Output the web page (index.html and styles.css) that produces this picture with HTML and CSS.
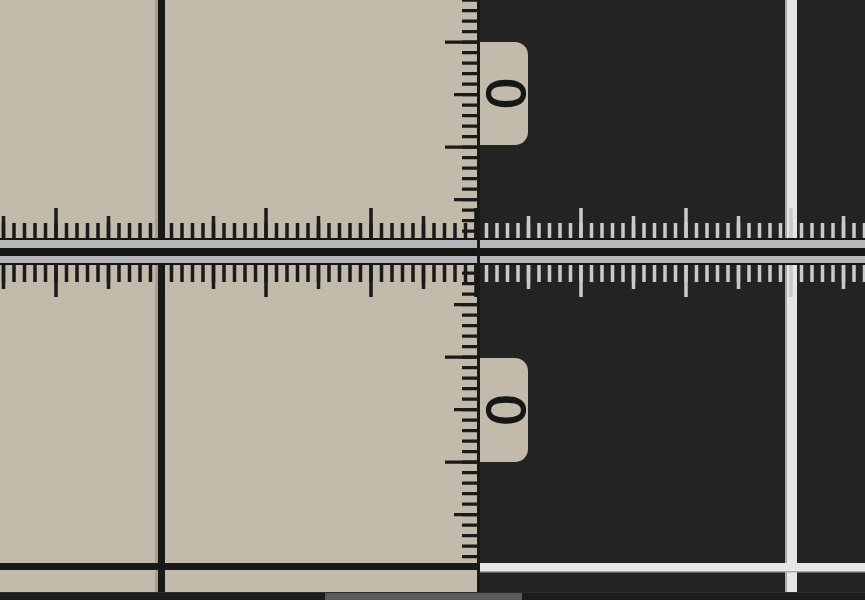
FILE: index.html
```html
<!DOCTYPE html>
<html>
<head>
<meta charset="utf-8">
<link rel="stylesheet" href="styles.css">
</head>
<body>
<div class="app">
  <div class="viewport">
    <div class="pane pane-paper"></div>
    <div class="pane pane-dark"></div>
    <svg class="overlay" width="865" height="592" viewBox="0 0 865 592">
      <!-- guide lines -->
      <rect class="guide-shade" x="155" y="0" width="3" height="592"/>
      <rect class="guide-dark" x="158" y="0" width="7" height="592"/>
      <rect class="guide-light-edge" x="785" y="0" width="2" height="592"/>
      <rect class="guide-light" x="787" y="0" width="10" height="592"/>

      <!-- horizontal ruler ticks, paper side -->
      <g class="ticks-dark">
        <line x1="1.75" x2="478" y1="230.5" y2="230.5" stroke-width="15" stroke-dasharray="3.5 7"/>
        <line x1="1.75" x2="478" y1="227" y2="227" stroke-width="22" stroke-dasharray="3.5 101.5"/>
        <line x1="54.25" x2="478" y1="223" y2="223" stroke-width="30" stroke-dasharray="3.5 101.5"/>
        <line x1="1.75" x2="478" y1="273.5" y2="273.5" stroke-width="17" stroke-dasharray="3.5 7"/>
        <line x1="1.75" x2="478" y1="277" y2="277" stroke-width="24" stroke-dasharray="3.5 101.5"/>
        <line x1="54.25" x2="478" y1="281" y2="281" stroke-width="32" stroke-dasharray="3.5 101.5"/>
      </g>
      <!-- horizontal ruler ticks, dark side -->
      <g class="ticks-light">
        <line x1="484.75" x2="865" y1="230.5" y2="230.5" stroke-width="15" stroke-dasharray="3.5 7"/>
        <line x1="526.75" x2="865" y1="227" y2="227" stroke-width="22" stroke-dasharray="3.5 101.5"/>
        <line x1="579.25" x2="865" y1="223" y2="223" stroke-width="30" stroke-dasharray="3.5 101.5"/>
        <line x1="484.75" x2="865" y1="273.5" y2="273.5" stroke-width="17" stroke-dasharray="3.5 7"/>
        <line x1="526.75" x2="865" y1="277" y2="277" stroke-width="24" stroke-dasharray="3.5 101.5"/>
        <line x1="579.25" x2="865" y1="281" y2="281" stroke-width="32" stroke-dasharray="3.5 101.5"/>
      </g>

      <!-- vertical ruler ticks -->
      <g class="ticks-dark">
        <line x1="469.5" x2="469.5" y1="-1.5" y2="562" stroke-width="15" stroke-dasharray="3.3 7.2"/>
        <line x1="465.5" x2="465.5" y1="93" y2="562" stroke-width="23" stroke-dasharray="3.3 101.7"/>
        <line x1="461" x2="461" y1="40.5" y2="562" stroke-width="32" stroke-dasharray="3.3 101.7"/>
      </g>

      <!-- ruler band -->
      <rect class="band-dark" x="0" y="238" width="865" height="27"/>
      <rect class="band-light" x="0" y="240" width="865" height="8"/>
      <rect class="band-light" x="0" y="256" width="865" height="7"/>

      <!-- edges -->
      <rect class="guide-dark" x="477" y="0" width="3" height="592"/>
      <rect class="guide-dark" x="0" y="563" width="478" height="7"/>
      <rect class="guide-light" x="480" y="563" width="385" height="8"/>
      <rect class="guide-light-edge" x="480" y="571" width="385" height="1.5"/>

      <!-- labels -->
      <path class="tab" d="M480 42 H515 A13 13 0 0 1 528 55 V132 A13 13 0 0 1 515 145 H480 Z"/>
      <text class="tab-label" transform="translate(505 93.5) rotate(90)" text-anchor="middle" dominant-baseline="central">0</text>
      <path class="tab" d="M480 358 H515 A13 13 0 0 1 528 371 V449 A13 13 0 0 1 515 462 H480 Z"/>
      <text class="tab-label" transform="translate(505 410) rotate(90)" text-anchor="middle" dominant-baseline="central">0</text>
    </svg>
  </div>
  <div class="hscroll"><div class="hscroll-thumb"></div></div>
</div>
</body>
</html>
```
FILE: styles.css
```css
html, body {
  margin: 0;
  padding: 0;
  background: #1d1d1d;
}

.app {
  width: 865px;
  height: 600px;
  display: flex;
  flex-direction: column;
  overflow: hidden;
}

.viewport {
  position: relative;
  height: 592px;
  display: flex;
  flex-direction: row;
}

.pane-paper {
  width: 478px;
  background: #c2bbab;
}

.pane-dark {
  flex: 1;
  background: #232323;
}

.overlay {
  position: absolute;
  left: 0;
  top: 0;
}

.guide-dark { fill: #191919; }
.guide-shade { fill: #a6a091; }
.guide-light { fill: #e6e6e6; }
.guide-light-edge { fill: #a8a8a8; }

.ticks-dark line { stroke: #1a1a1a; }
.ticks-light line { stroke: #cacaca; }

.band-dark { fill: #151515; }
.band-light { fill: #b6b5bb; }

.tab { fill: #c2bbab; }

.tab-label {
  font-family: "DejaVu Sans", sans-serif;
  font-size: 52px;
  fill: #161616;
  stroke: #161616;
  stroke-width: 1.2px;
}

.hscroll {
  height: 8px;
  background: #1c1c1c;
  border-top: 1px solid #2c2c2c;
  box-sizing: border-box;
  padding-left: 325px;
}

.hscroll-thumb {
  width: 197px;
  height: 100%;
  background: #5a5a5a;
}
```
